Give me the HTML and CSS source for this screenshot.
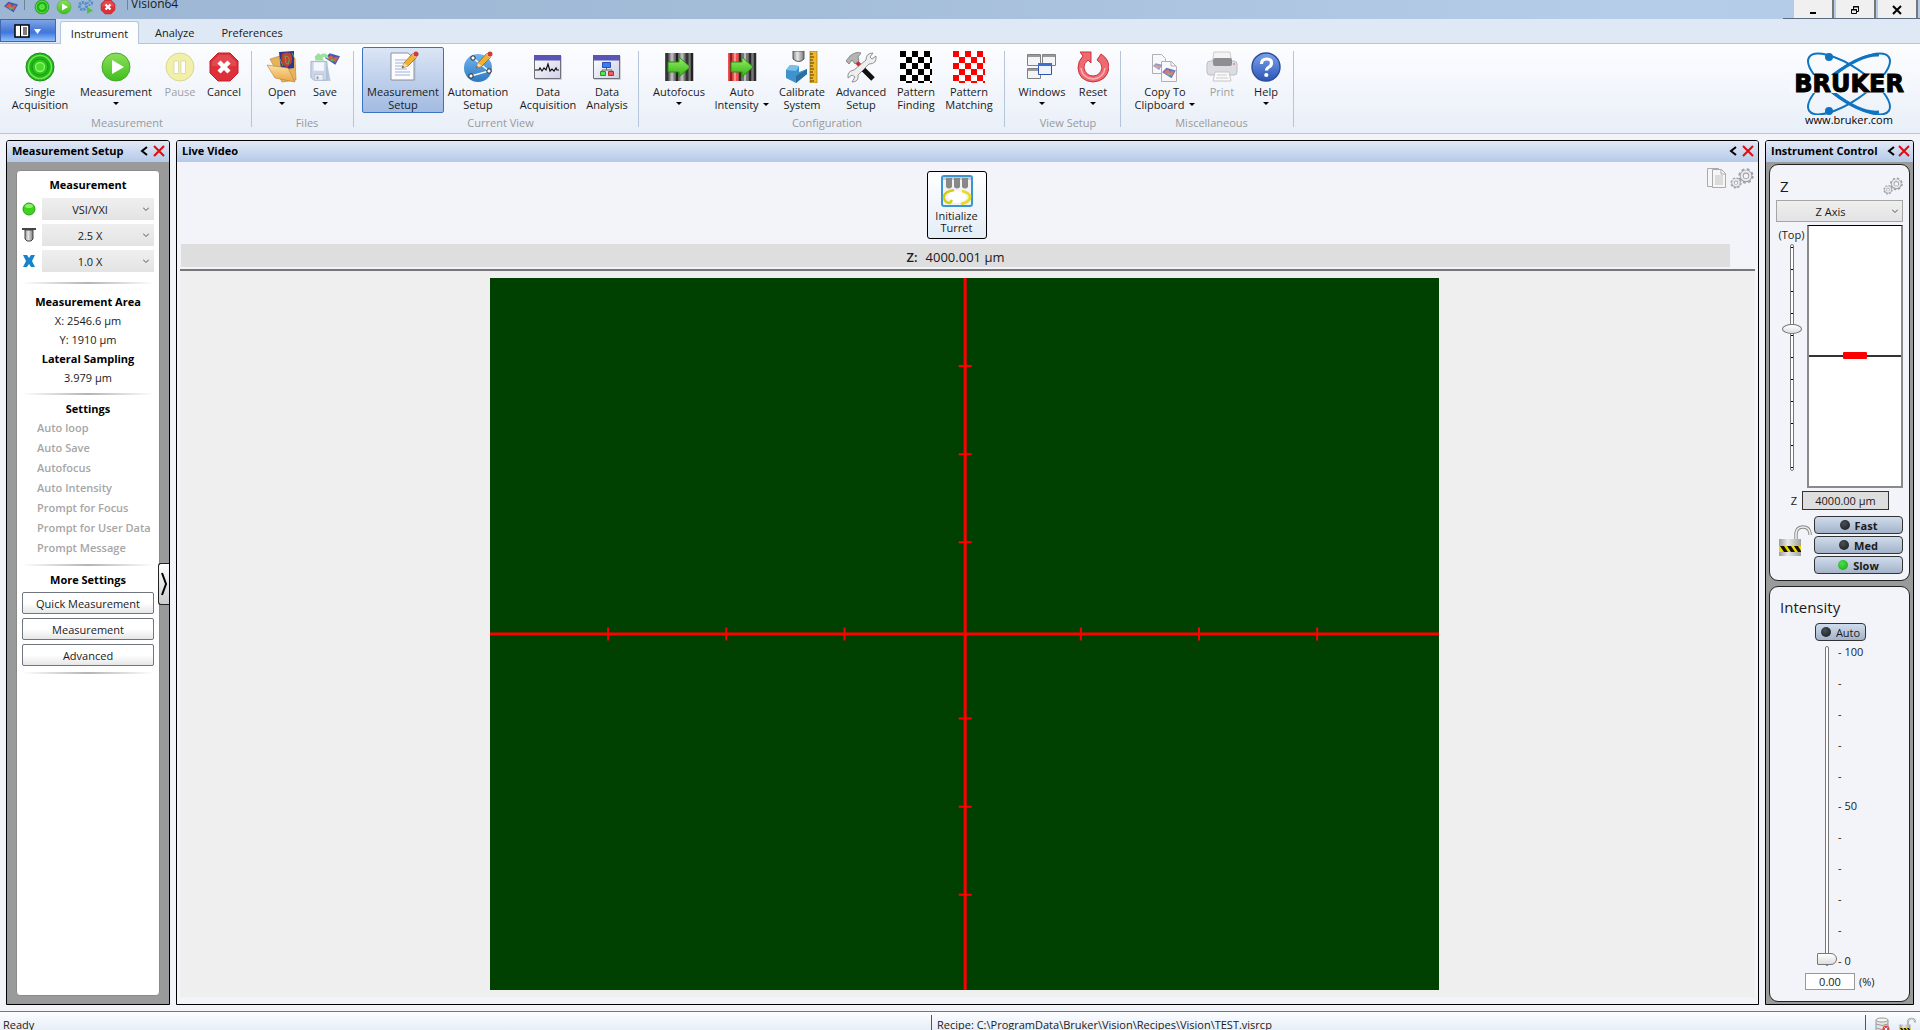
FILE: index.html
```html
<!DOCTYPE html>
<html lang="en">
<head>
<meta charset="utf-8">
<title>Vision64</title>
<link rel="stylesheet" href="styles.css">
</head>
<body>
<svg class="defs" aria-hidden="true">
  <defs>
    <linearGradient id="gGreen" x1="0" y1="0" x2="0" y2="1"><stop offset="0" stop-color="#8be05a"/><stop offset="1" stop-color="#3fbf1c"/></linearGradient>
    <linearGradient id="gArrow" x1="0" y1="0" x2="0" y2="1"><stop offset="0" stop-color="#9af06a"/><stop offset="1" stop-color="#2eb010"/></linearGradient>
    <linearGradient id="gBlue" x1="0" y1="0" x2="0" y2="1"><stop offset="0" stop-color="#6fb6f0"/><stop offset="1" stop-color="#2f78c0"/></linearGradient>
    <linearGradient id="gHelp" x1="0" y1="0" x2="0" y2="1"><stop offset="0" stop-color="#7da2ea"/><stop offset="1" stop-color="#2b55b8"/></linearGradient>
    <linearGradient id="gSteel" x1="0" y1="0" x2="1" y2="0"><stop offset="0" stop-color="#8a8a8a"/><stop offset=".4" stop-color="#e8e8e8"/><stop offset="1" stop-color="#777"/></linearGradient>
    <linearGradient id="gLock" x1="0" y1="0" x2="1" y2="0"><stop offset="0" stop-color="#9c9c9c"/><stop offset=".4" stop-color="#e8e8e8"/><stop offset="1" stop-color="#a0a0a0"/></linearGradient>
    <linearGradient id="gFolder" x1="0" y1="0" x2="0" y2="1"><stop offset="0" stop-color="#fde0a0"/><stop offset="1" stop-color="#e9a545"/></linearGradient>
    <linearGradient id="gPane" x1="0" y1="0" x2="1" y2="1"><stop offset="0" stop-color="#fff"/><stop offset="1" stop-color="#cfd0e8"/></linearGradient>
    <symbol id="single" viewBox="0 0 32 32"><circle cx="16" cy="16" r="14" fill="#22b41c" stroke="#1c8f1a"/><circle cx="16" cy="16" r="11.500" fill="none" stroke="#6ee84a" stroke-width="1.600"/><circle cx="16" cy="16" r="8" fill="#2cc71c" stroke="#189c14"/><circle cx="16" cy="16" r="4.500" fill="#4bdc30" stroke="#8cf566" stroke-width="1.400"/></symbol>
    <symbol id="play" viewBox="0 0 32 32"><circle cx="16" cy="16" r="14" fill="url(#gGreen)" stroke="#4aa52c"/><path d="M12 9 24 16 12 23Z" fill="#fff"/></symbol>
    <symbol id="pause" viewBox="0 0 32 32"><circle cx="16" cy="16" r="14" fill="#f1efa8" stroke="#d9d794"/><path d="M10 10h4.500v12.500H10zM17 10h4.500v12.500H17z" fill="#fff" stroke="#d2d0a0" stroke-width=".7"/></symbol>
    <symbol id="cancel" viewBox="0 0 32 32"><path d="M10 2h12l8 8v12l-8 8H10l-8-8V10Z" fill="#dd3038" stroke="#c02028"/><path d="M4 11 11 4h10l7 7v4H4Z" fill="#fff" opacity=".13"/><path d="m11 11 10 10M21 11 11 21" stroke="#fff" stroke-width="4.400"/></symbol>
    <symbol id="surface" viewBox="0 0 16 14"><path d="m0 6 5-5 11 3-5 9Z" fill="#4358b8"/><path d="m2 6 4-3 3 2-2 4ZM10 5l4 0-3 6-2-2Z" fill="#e05a3c"/><path d="m5 8 4-2 1 3-2 1Z" fill="#58b060"/></symbol>
    <symbol id="open" viewBox="0 0 32 32"><path d="M4 8 14 5l2 3 13-1 1 22-14 2Z" fill="#e7b25c" stroke="#b5802e" stroke-width=".6"/><path d="M13 1 28 0v17l-13 2Z" fill="#2a3590"/><path d="M16 3q9-4 10 3t-5 10q-7-2-5-13Z" fill="#c4402c"/><path d="M19 5q5 0 4 5t-3 2ZM26 2l2 4M14 8l3 7" stroke="#52b060" fill="none"/><path d="m1 14 21 3 7 14-20-4Z" fill="url(#gFolder)" stroke="#b5802e" stroke-width=".6"/></symbol>
    <symbol id="save" viewBox="0 0 34 32"><use href="#surface" x="17" y="0" width="16" height="15"/><path d="M6 5 10 1l2 2q8-4 9 5-4-4-7-2l2 3-9 0Z" fill="#9be09a"/><path d="m3 10 16 1 4 20-18-1Z" fill="#b9c7de"/><path d="M2 10h17v20H5l-3-3Z" fill="#c9d6ea" stroke="#a5b6d0"/><path d="M5 11h11v9H5z" fill="#f4f7fb"/><path d="M6 24h9v6H6z" fill="#eceff4" stroke="#a9b3c4" stroke-width=".6"/><path d="M8 26h2v3H8z" fill="#8e9bb2"/></symbol>
    <symbol id="pencil" viewBox="0 0 18 18"><path d="m1 17 2-5L12 2l4 4-9 9Z" fill="#f0b030" stroke="#9a6a18" stroke-width=".8"/><path d="m1 17 2-5 4 3Z" fill="#f4dcb0"/><path d="m1 17 1-2 1 1Z" fill="#222"/><path d="m11 3 4 4 1-1-4-4Z" fill="#ddd"/><circle cx="15" cy="3" r="2.500" fill="#d23a3a"/></symbol>
    <symbol id="msetup" viewBox="0 0 32 32"><path d="M6 3h23v27H6z" fill="#b9c0cc" opacity=".6"/><path d="M4 2h17l6 6v21H4z" fill="#fcfcff" stroke="#8c93a3"/><path d="M8 9h11M8 12h10M8 15h9M8 18h12M8 21h15M8 24h15" stroke="#9fb0d8"/><use href="#pencil" x="14" y="0" width="18" height="18"/></symbol>
    <symbol id="asetup" viewBox="0 0 32 32"><circle cx="16" cy="17" r="14" fill="url(#gBlue)"/><path d="M11 7 27 20 9 25" fill="none" stroke="#fff" stroke-width="1.300"/><g fill="#fff" stroke="#222"><circle cx="11" cy="7" r="2.200"/><circle cx="27" cy="20" r="2.200"/><circle cx="9" cy="25" r="2.200"/></g><use href="#pencil" x="13" y="0" width="18" height="18"/></symbol>
    <symbol id="dacq" viewBox="0 0 32 32"><path d="M3 5h27v24H3z" fill="#aaa" opacity=".5"/><path d="M2.500 4.500h26v23h-26z" fill="url(#gPane)" stroke="#70707c"/><path d="M2 4h27v5.500H2z" fill="#5a54b4"/><path d="M3 19h4l1-2 2 3 2-3 2 2 2-6 2 7 2-2 2 2 2-3 1 2h2" fill="none" stroke="#111" stroke-width="1.200"/></symbol>
    <symbol id="dana" viewBox="0 0 32 32"><path d="M3 5h27v24H3z" fill="#aaa" opacity=".5"/><path d="M2.500 4.500h26v23h-26z" fill="url(#gPane)" stroke="#70707c"/><path d="M2 4h27v5.500H2z" fill="#5a54b4"/><path d="M15.500 15v4M11 21v-2h10v2" fill="none" stroke="#666"/><path d="M11.500 11.500h8v5h-8z" fill="#3f7bf0" stroke="#2450b8"/><path d="M9.500 20.500h5v4h-5z" fill="#55e055" stroke="#2c962c"/><path d="M17.500 20.500h5v4h-5z" fill="#f05a5a" stroke="#b43030"/></symbol>
    <symbol id="arrow" viewBox="0 0 24 22"><path d="M1 6h11V1l11 10-11 10v-5H1Z" fill="url(#gArrow)" stroke="#2c8a14"/></symbol>
    <symbol id="afocus" viewBox="0 0 32 32"><path d="M2 2h28v28H2z" fill="#777"/><path d="M4 2v28M24 2v28" stroke="#333" stroke-width="3"/><path d="M9 2v28M19 2v28" stroke="#b8b8b8" stroke-width="3"/><path d="M14 2v28M29 2v28" stroke="#222" stroke-width="2.500"/><use href="#arrow" x="4" y="5" width="24" height="22"/></symbol>
    <symbol id="aint" viewBox="0 0 32 32"><path d="M2 2h14v28H2z" fill="#f05050"/><path d="M16 2h14v28H16z" fill="#777"/><path d="M5 2v28" stroke="#8a2020" stroke-width="2.500"/><path d="M9 2v28" stroke="#ff9090" stroke-width="2"/><path d="M14 2v28M24 2v28M29 2v28" stroke="#2a2a2a" stroke-width="2.500"/><path d="M19 2v28" stroke="#bbb" stroke-width="2"/><use href="#arrow" x="4" y="5" width="24" height="22"/></symbol>
    <symbol id="calib" viewBox="0 0 32 32"><path d="M7 0h11v8q-5 5-11 0Z" fill="url(#gSteel)" stroke="#555"/><path d="m0 19 4-5 9 1v6l8-3v5l-11 9-10-5Z" fill="#3f93cc"/><path d="m0 19 4-5 9 1-3 5Z" fill="#7cc0ea"/><path d="m10 25 11-7v5l-11 9Z" fill="#2a6ea4"/><path d="M24 0h7v32h-7z" fill="#f0b828" stroke="#a07818" stroke-width=".7"/><path d="M24 3h3M24 6h4M24 9h3M24 12h4M24 15h3M24 18h4M24 21h3M24 24h4M24 27h3M24 30h4" stroke="#4a3a08"/></symbol>
    <symbol id="tools" viewBox="0 0 32 32"><path d="m10 9 7 8" stroke="#e02020" stroke-width="4"/><path d="m18 18 10 10" stroke="#111" stroke-width="5"/><path d="m1 10 4-5q6-5 11-3l-3 4 1 4-4 3-3-4-3 4Z" fill="#b4b4b4" stroke="#777" stroke-width=".8"/><path d="M21 9q0-7 7-7l-3 4 2 2 4-3q1 8-7 8L13 24q1 7-6 7l3-5-3-2-4 3q-1-7 6-8Z" fill="#eee" stroke="#888" stroke-width=".9"/></symbol>
    <pattern id="pBlack" width="12" height="12" patternUnits="userSpaceOnUse"><path fill="#fff" d="M0 0h12v12H0z"/><path d="M0 0h6v6H0zM6 6h6v6H6z"/></pattern>
    <pattern id="pRed" width="12" height="12" patternUnits="userSpaceOnUse"><path fill="#fff" d="M0 0h12v12H0z"/><path fill="#f00" d="M0 0h6v6H0zM6 6h6v6H6z"/></pattern>
    <symbol id="pfind" viewBox="0 0 32 32"><path fill="url(#pBlack)" d="M0 0h32v32H0z"/></symbol>
    <symbol id="pmatch" viewBox="0 0 32 32"><path fill="url(#pRed)" d="M0 0h32v32H0z"/></symbol>
    <symbol id="windows" viewBox="0 0 32 32"><g fill="#f4f4f6" stroke="#808080"><path d="M1.500 3.500h13v11h-13zM16.500 3.500h13v11h-13zM1.500 17.500h13v10h-13z"/></g><path d="M2 5h12M17 5h12M2 19h12" stroke="#999" stroke-width="2"/><path d="M12.500 12.500h13v11h-13z" fill="#eef3ff" stroke="#2f55a8"/><path d="M12 13.500h14" stroke="#3d6ed0" stroke-width="3"/></symbol>
    <symbol id="reset" viewBox="0 0 32 32"><path d="M3 1h11v11l-3-3q-5 4-4 8 2 8 9 8t9-8q0-5-5-8l4-6q8 5 8 14-2 13-16 14Q2 30 1 17 1 10 6 5Z" fill="#ee6a70" stroke="#c8323a"/><path d="M4 17q1 10 12 11 11-1 12-11" fill="none" stroke="#fbb0b2" stroke-width="1.500"/></symbol>
    <symbol id="copy" viewBox="0 0 32 32"><g fill="#f8f8fa" stroke="#b0b0b4"><path d="M3.500 3.500h9l4 4v15h-13z"/><path d="M12.500 10.500h10l5 5v15h-15z"/></g><path d="M22 10v5h5" fill="none" stroke="#b0b0b4"/><use href="#surface" x="4" y="11" width="9" height="9" opacity=".6"/><use href="#surface" x="13" y="16" width="14" height="12" opacity=".8"/></symbol>
    <symbol id="print" viewBox="0 0 32 32"><path d="M8 1h16l2 12H6Z" fill="#f4f4f4" stroke="#ccc"/><rect x="1" y="10" width="30" height="14" rx="3" fill="#dcdce2" stroke="#bdbdc6"/><rect x="7" y="7" width="19" height="8" rx="2" fill="#8d8d92"/><path d="M9 21h14l2 9H7Z" fill="#fafafa" stroke="#c6c6cc"/><path d="M11 24h10M10 27h12" stroke="#ccc"/><circle cx="28" cy="13" r="1" fill="#f08080"/></symbol>
    <symbol id="help" viewBox="0 0 32 32"><circle cx="16" cy="16" r="14" fill="url(#gHelp)" stroke="#2a4c9c" stroke-width="1.400"/><path d="M11.500 13q0-5 5-5t5 4q0 2.500-2.500 4t-2.500 3.500" fill="none" stroke="#fff" stroke-width="3.200"/><circle cx="16.300" cy="24" r="2.100" fill="#fff"/></symbol>
    <symbol id="gears" viewBox="0 0 24 21"><g fill="none" stroke="#a2a2a8"><circle cx="16" cy="8" r="6.200" stroke-width="3" stroke-dasharray="2.600 2.270"/><circle cx="16" cy="8" r="4.300" stroke-width="4"/><circle cx="6" cy="15" r="4.300" stroke-width="2.600" stroke-dasharray="1.900 1.480"/><circle cx="6" cy="15" r="3" stroke-width="3.200"/></g><g fill="none" stroke="#e9e9ee"><circle cx="16" cy="7.700" r="4.300" stroke-width="2.200"/><circle cx="6" cy="14.700" r="3" stroke-width="1.700"/></g></symbol>
    <symbol id="pages" viewBox="0 0 20 22"><g fill="#f6f6f6" stroke="#aaa"><path d="M.5 1.500h11v18H.5z"/><path d="M5.500 2.500h9l4 4v14h-13z"/></g><path d="M8 9h8M8 11h8M8 13h8M8 15h8M8 17h8" stroke="#c0c0c0"/><path d="M14 3v4h4" fill="none" stroke="#aaa"/></symbol>
    <symbol id="turret" viewBox="0 0 32 32"><rect x="1" y="1" width="30" height="30" rx="2" fill="#f2f2f2" stroke="#3a96d2" stroke-width="2"/><path d="M2 2h28v3H2z" fill="#ccc"/><path d="M5 3h6v9q-3 3-6 0ZM13 3h6v9q-3 3-6 0ZM21 3h6v9q-3 3-6 0Z" fill="#888"/><ellipse cx="16" cy="22" rx="9" ry="6" fill="#fff"/><path d="M13 15Q2 17 3 23q1 5 6 5l2-3" fill="none" stroke="#d8cc10" stroke-width="2.400"/><path d="M21 16q8 2 8 6 0 5-9 7" fill="none" stroke="#e6dc20" stroke-width="2.800"/></symbol>
    <symbol id="lock" viewBox="0 0 34 34"><path d="M18 16V9q1-6 7-6t7 6v2" fill="none" stroke="#888" stroke-width="3.400"/><path d="M18 16V9q1-6 7-6t7 6v2" fill="none" stroke="#eee" stroke-width="1.600"/><rect x="1" y="15" width="22" height="17" fill="url(#gLock)"/><path d="M1 22h22v6H1z" fill="#f2d800"/><path d="m2 22 4 6h4l-4-6ZM9 22l4 6h4l-4-6ZM16 22l4 6h3v-1l-3-5Z" fill="#111"/></symbol>
    <symbol id="lens" viewBox="0 0 14 14"><path d="M0 0h14v2H0z" fill="#444"/><path d="M3 2h8v9l-2 2H5l-2-2Z" fill="url(#gSteel)" stroke="#444"/></symbol>
    <symbol id="cross" viewBox="0 0 12 12"><path d="m1 1 10 10M11 1 1 11" stroke="#e00b0b" stroke-width="2"/></symbol>
    <symbol id="less" viewBox="0 0 8 10"><path d="M7 1 2 5l5 4" fill="none" stroke="#000" stroke-width="2"/></symbol>
    <symbol id="chev" viewBox="0 0 6 4"><path d="m0 .5 3 3 3-3" fill="none" stroke="#555"/></symbol>
  </defs>
</svg>

<header class="titlebar">
  <div class="quick">
    <svg width="14" height="14"><use href="#surface"/></svg>
    <i class="bar"></i>
    <button aria-label="Single acquisition"><svg width="16" height="16"><use href="#single"/></svg></button>
    <button aria-label="Measurement"><svg width="16" height="16"><use href="#play"/></svg></button>
    <button aria-label="Automation"><svg width="16" height="16" viewBox="0 0 16 16"><g fill="none" stroke="#4d8fc4"><circle cx="5" cy="7" r="3.500" stroke-width="3" stroke-dasharray="2 1"/><circle cx="12" cy="4" r="2" stroke-width="2" stroke-dasharray="1.500 1"/></g><path d="m9 8 6 3.500L9 15Z" fill="#4fc040"/></svg></button>
    <button aria-label="Cancel"><svg width="16" height="16"><use href="#cancel"/></svg></button>
    <i class="bar"></i>
  </div>
  <span class="app-name">Vision64</span>
  <div class="winbtns">
    <button aria-label="Minimize"><svg width="12" height="12" viewBox="0 0 12 12"><path d="M3 9h6" stroke="#000" stroke-width="2"/></svg></button>
    <button aria-label="Restore"><svg width="12" height="12" viewBox="0 0 12 12"><path d="M4.500 5V2.500h5v5H7M4 3h6M2.500 5.500h5v4h-5zM2 6h6" fill="none" stroke="#000"/></svg></button>
    <button aria-label="Close"><svg width="12" height="12" viewBox="0 0 12 12"><path d="m2 2 8 8M10 2l-8 8" stroke="#000" stroke-width="2"/></svg></button>
  </div>
</header>

<nav class="tabs">
  <button class="appmenu" aria-label="Application menu"><svg width="28" height="14" viewBox="0 0 28 14"><path d="M1 1h14v12H1z" fill="#fff" stroke="#000" stroke-width="1.500"/><path d="M6.500 1v12M9 4h4M9 6h4M9 8h4M9 10h4" stroke="#000"/><path d="M20 5h7l-3.500 5Z" fill="#fff"/></svg></button>
  <a class="tab active" href="#instrument">Instrument</a>
  <a class="tab analyze" href="#analyze">Analyze</a>
  <a class="tab prefs" href="#preferences">Preferences</a>
</nav>

<section class="ribbon" id="instrument">
  <div class="group g-measure">
    <div class="tools">
      <button><svg><use href="#single"/></svg><span>Single<br>Acquisition</span></button>
      <button><svg><use href="#play"/></svg><span>Measurement</span><i class="drop"></i></button>
      <button disabled><svg><use href="#pause"/></svg><span>Pause</span></button>
      <button><svg><use href="#cancel"/></svg><span>Cancel</span></button>
    </div>
    <h2>Measurement</h2>
  </div>
  <div class="group g-files">
    <div class="tools">
      <button><svg><use href="#open"/></svg><span>Open</span><i class="drop"></i></button>
      <button><svg><use href="#save"/></svg><span>Save</span><i class="drop"></i></button>
    </div>
    <h2>Files</h2>
  </div>
  <div class="group g-view">
    <div class="tools">
      <button class="selected"><svg><use href="#msetup"/></svg><span>Measurement<br>Setup</span></button>
      <button><svg><use href="#asetup"/></svg><span>Automation<br>Setup</span></button>
      <button><svg><use href="#dacq"/></svg><span>Data<br>Acquisition</span></button>
      <button><svg><use href="#dana"/></svg><span>Data<br>Analysis</span></button>
    </div>
    <h2>Current View</h2>
  </div>
  <div class="group g-config">
    <div class="tools">
      <button><svg><use href="#afocus"/></svg><span>Autofocus</span><i class="drop"></i></button>
      <button><svg><use href="#aint"/></svg><span>Auto<br>Intensity <i class="drop inline"></i></span></button>
      <button><svg><use href="#calib"/></svg><span>Calibrate<br>System</span></button>
      <button><svg><use href="#tools"/></svg><span>Advanced<br>Setup</span></button>
      <button><svg><use href="#pfind"/></svg><span>Pattern<br>Finding</span></button>
      <button><svg><use href="#pmatch"/></svg><span>Pattern<br>Matching</span></button>
    </div>
    <h2>Configuration</h2>
  </div>
  <div class="group g-setup">
    <div class="tools">
      <button><svg><use href="#windows"/></svg><span>Windows</span><i class="drop"></i></button>
      <button><svg><use href="#reset"/></svg><span>Reset</span><i class="drop"></i></button>
    </div>
    <h2>View Setup</h2>
  </div>
  <div class="group g-misc">
    <div class="tools">
      <button><svg><use href="#copy"/></svg><span>Copy To<br>Clipboard <i class="drop inline"></i></span></button>
      <button disabled><svg><use href="#print"/></svg><span>Print</span></button>
      <button><svg><use href="#help"/></svg><span>Help</span><i class="drop"></i></button>
    </div>
    <h2>Miscellaneous</h2>
  </div>
  <a class="brand" href="#bruker">
    <svg width="120" height="64" viewBox="0 0 120 64">
      <g fill="none" stroke="#0f74c0">
        <ellipse cx="60" cy="33" rx="48" ry="17" transform="rotate(34 60 33)" stroke-width="2"/>
        <ellipse cx="60" cy="33" rx="48" ry="17" transform="rotate(-34 60 33)" stroke-width="2"/>
        <path d="M45 24Q72 3 90 4" stroke-width="3"/><path d="M45 42Q72 63 90 61" stroke-width="3"/>
      </g>
      <path d="M0 24h120v18H0z" fill="#f5f8fc"/>
      <circle cx="40" cy="6" r="4" fill="#0f74c0"/><circle cx="40" cy="60" r="4" fill="#0f74c0"/>
      <text x="60" y="41" class="logo-text" text-anchor="middle">BRUKER</text>
    </svg>
    <span>www.bruker.com</span>
  </a>
</section>

<main class="workspace">
  <aside class="panel setup">
    <header><h1>Measurement Setup</h1><button aria-label="Collapse"><svg width="8" height="10"><use href="#less"/></svg></button><button aria-label="Close"><svg width="12" height="12"><use href="#cross"/></svg></button></header>
    <div class="graybody">
      <div class="card">
        <h3>Measurement</h3>
        <div class="combos">
          <label for="mode"><svg width="14" height="14" viewBox="0 0 14 14"><circle cx="7" cy="7" r="6" fill="#3bd31c" stroke="#2a9e18"/><ellipse cx="7" cy="4" rx="4" ry="2" fill="#8cf06c"/></svg></label>
          <div class="combo"><select id="mode"><option>VSI/VXI</option></select><svg width="6" height="4"><use href="#chev"/></svg></div>
          <label for="objective"><svg width="14" height="14"><use href="#lens"/></svg></label>
          <div class="combo"><select id="objective"><option>2.5 X</option></select><svg width="6" height="4"><use href="#chev"/></svg></div>
          <label for="fov"><svg width="14" height="14" viewBox="0 0 14 14"><path d="M1 1h4l2 3 2-3h4L10 7l3 6H9l-2-3-2 3H1l3-6Z" fill="#1684cc"/></svg></label>
          <div class="combo"><select id="fov"><option>1.0 X</option></select><svg width="6" height="4"><use href="#chev"/></svg></div>
        </div>
        <hr class="wide">
        <h3>Measurement Area</h3>
        <p>X: 2546.6 µm</p>
        <p>Y: 1910 µm</p>
        <h3>Lateral Sampling</h3>
        <p>3.979 µm</p>
        <hr>
        <h3>Settings</h3>
        <ul>
          <li>Auto loop</li><li>Auto Save</li><li>Autofocus</li><li>Auto Intensity</li><li>Prompt for Focus</li><li>Prompt for User Data</li><li>Prompt Message</li>
        </ul>
        <hr>
        <h3>More Settings</h3>
        <div class="more">
          <button>Quick Measurement</button>
          <button>Measurement</button>
          <button>Advanced</button>
        </div>
        <hr>
      </div>
      <button class="expander" aria-label="Expand"><svg width="8" height="26" viewBox="0 0 8 26"><path d="m2 2 4 11-4 11" fill="none" stroke="#000" stroke-width="2"/></svg></button>
    </div>
  </aside>

  <section class="panel live">
    <header><h1>Live Video</h1><button aria-label="Collapse"><svg width="8" height="10"><use href="#less"/></svg></button><button aria-label="Close"><svg width="12" height="12"><use href="#cross"/></svg></button></header>
    <div class="livebar">
      <button class="turret"><svg width="32" height="32"><use href="#turret"/></svg><span>Initialize<br>Turret</span></button>
      <div class="corner"><button aria-label="Copy"><svg width="20" height="22"><use href="#pages"/></svg></button><button aria-label="Options"><svg width="24" height="21"><use href="#gears"/></svg></button></div>
    </div>
    <div class="zbar"><b>Z:</b><span>4000.001 µm</span></div>
    <div class="video">
      <svg viewBox="0 0 948 711" role="img" aria-label="Live video with crosshair">
        <path d="M0 0h948v711H0z" fill="#004000"/>
        <g stroke="#f00" fill="none">
          <path d="M474.500 0v711M0 355.500h948" stroke-width="3"/>
          <path d="M468 88h13M468 176h13M468 264h13M468 440h13M468 528h13M468 616h13M118 349v13M236 349v13M354 349v13M590 349v13M708 349v13M826 349v13" stroke-width="2"/>
        </g>
      </svg>
    </div>
  </section>

  <aside class="panel control">
    <header><h1>Instrument Control</h1><button aria-label="Collapse"><svg width="8" height="10"><use href="#less"/></svg></button><button aria-label="Close"><svg width="12" height="12"><use href="#cross"/></svg></button></header>
    <div class="graybody">
      <div class="box zbox">
        <div class="boxhead"><h3>Z</h3><button aria-label="Z options"><svg width="20" height="18"><use href="#gears"/></svg></button></div>
        <div class="combo axis"><select aria-label="Axis"><option>Z Axis</option></select><svg width="6" height="4"><use href="#chev"/></svg></div>
        <div class="zrow">
          <div class="zscale"><label for="zpos">(Top)</label><input id="zpos" class="vrange oval" type="range" min="0" max="1000" value="632"></div>
          <div class="stage"><svg width="24" height="8"><rect y="0" width="24" height="7" rx="1" fill="#f00"/></svg></div>
        </div>
        <div class="zvalue"><label for="zval">Z</label><input id="zval" type="text" value="4000.00 µm"></div>
        <div class="speeds">
          <svg width="34" height="34"><use href="#lock"/></svg>
          <div><button><i></i>Fast</button><button><i></i>Med</button><button><i class="on"></i>Slow</button></div>
        </div>
      </div>
      <div class="box ibox">
        <h3>Intensity</h3>
        <button class="auto"><i></i>Auto</button>
        <div class="irow">
          <input class="vrange tag" aria-label="Intensity" type="range" min="0" max="100" value="0">
          <ol><li>- 100</li><li>-</li><li>-</li><li>-</li><li>-</li><li>- 50</li><li>-</li><li>-</li><li>-</li><li>-</li><li>- 0</li></ol>
        </div>
        <div class="ivalue"><input id="ival" type="text" value="0.00"><label for="ival">(%)</label></div>
      </div>
    </div>
  </aside>
</main>

<footer class="status">
  <span class="ready">Ready</span>
  <span class="recipe">Recipe: C:\ProgramData\Bruker\Vision\Recipes\Vision\TEST.visrcp</span>
  <div class="sicons">
    <svg width="15" height="18" viewBox="0 0 15 18"><path d="M1 3v12q6 3 12 0V3" fill="#e4e4e4" stroke="#999"/><ellipse cx="7" cy="3" rx="6" ry="2" fill="#f4f4f4" stroke="#999"/><path d="M1 7q6 3 12 0M1 11q6 3 12 0" fill="none" stroke="#999"/><circle cx="11" cy="12" r="3.500" fill="#e04848"/><path d="m9.500 10.500 3 3m0-3-3 3" stroke="#fff"/></svg>
    <svg width="17" height="17"><use href="#lock"/></svg>
  </div>
</footer>
</body>
</html>
```

FILE: styles.css
```css
* { box-sizing: border-box; }
html, body { height: 100%; }
body {
  margin: 0;
  display: flex;
  flex-direction: column;
  overflow: hidden;
  background: #f3f4fa;
  color: #1a1a1a;
  font: 11px/13px "Open Sans", "Noto Sans", sans-serif;
}
h1, h2, h3, p, ul, ol { margin: 0; padding: 0; }
ul, ol { list-style: none; }
button, input, select { font: inherit; color: inherit; margin: 0; }
button { padding: 0; border: 0; background: none; cursor: pointer; }
button svg { display: block; }
a { color: inherit; text-decoration: none; }
.defs { position: absolute; width: 0; height: 0; }

/* title bar */
.titlebar {
  flex: none;
  display: flex;
  align-items: flex-start;
  height: 19px;
  overflow: hidden;
  background: linear-gradient(90deg, #9cb6d4, #a3bcd8 40%, #b6cde9 85%, #b4cbe8);
}
.quick { display: flex; align-items: center; gap: 6px; height: 14px; padding-left: 4px; }
.quick .bar { width: 1px; height: 10px; align-self: flex-start; background: #6f8299; margin-right: 3px; }
.quick button:last-of-type { margin-right: 5px; }
.app-name { font-size: 12px; line-height: 8px; }
.winbtns { margin-left: auto; display: flex; gap: 2px; padding: 0 2px 0 11px; border-bottom: 1px solid #5c6c80; }
.winbtns button { width: 40px; height: 18px; display: flex; justify-content: center; align-items: flex-end; padding-bottom: 2px; background: #f0f0f0; border-right: 2px solid #777; }

/* tabs */
.tabs { flex: none; display: flex; align-items: flex-end; height: 25px; background: #dfe9f5; border-bottom: 1px solid #b5c6da; }
.appmenu {
  width: 56px;
  height: 23px;
  margin-right: 4px;
  align-self: flex-start;
  display: flex;
  align-items: center;
  justify-content: center;
  border: 1px solid #3f68b0;
  background: linear-gradient(#7ea4e4, #4a7ad8 50%, #3f78e0 60%, #8fc0f8);
}
.tab { height: 22px; padding: 0 11px; line-height: 24px; }
.tab.active { height: 23px; width: 79px; margin-bottom: -1px; padding: 0; text-align: center; background: #fcfdff; border: 1px solid #b5c6da; border-bottom: 0; border-radius: 3px 3px 0 0; }
.tab.analyze { margin-left: 5px; }
.tab.prefs { margin-left: 5px; }

/* ribbon */
.ribbon { flex: none; display: flex; height: 90px; background: linear-gradient(#fcfdff, #e9eff8); border-bottom: 1px solid #b5c6da; }
.group { position: relative; padding-top: 3px; height: 100%; }
.group::after { content: ""; position: absolute; right: 0; top: 7px; height: 76px; width: 1px; background: #b5c6da; }
.group h2 { font-size: 11px; font-weight: 400; line-height: 18px; color: #999; text-align: center; }
.tools { display: grid; height: 66px; margin-bottom: 1px; }
.tools button { display: flex; flex-direction: column; align-items: center; white-space: nowrap; padding-top: 3px; line-height: 13px; border: 1px solid transparent; border-radius: 2px; }
.tools svg { flex: none; width: 32px; height: 32px; margin-bottom: 2px; }
.tools button:disabled { color: #a0a0a0; }
.tools .selected { border-color: #3a73c4; background: linear-gradient(#dbe5f5, #a2bbe2); }
.drop { width: 0; height: 0; margin-top: 4px; border: 3px solid transparent; border-top: 3px solid #000; border-bottom: 0; }
.drop.inline { display: inline-block; margin: 0 0 3px 2px; }
.g-measure { width: 252px; padding-left: 2px; }
.g-measure .tools { grid-template-columns: 76px 76px 52px 36px; }
.g-files { width: 102px; padding-left: 8px; }
.g-files .tools { grid-template-columns: 44px 42px; }
.g-view { width: 285px; padding-left: 8px; }
.g-view .tools { grid-template-columns: 82px 68px 72px 46px; }
.g-config { width: 366px; padding-left: 10px; }
.g-config .tools { grid-template-columns: 60px 66px 54px 64px 46px 60px; }
.g-setup { width: 116px; padding-left: 10px; }
.g-setup .tools { grid-template-columns: 54px 48px; }
.g-misc { width: 173px; padding-left: 8px; }
.g-misc .tools { grid-template-columns: 72px 42px 46px; }
.brand { margin-left: auto; padding: 7px 11px 0 0; text-align: center; }
.brand svg { display: block; }
.brand span { display: block; font-size: 11px; line-height: 10px; color: #000; }
.logo-text { font: 700 24px "DejaVu Sans", sans-serif; fill: #000; stroke: #000; stroke-width: 1px; }

/* docked panels */
.workspace { flex: 1; min-height: 0; display: grid; grid-template-columns: 164px 1fr 149px; gap: 6px; padding: 6px; }
.panel { display: flex; flex-direction: column; min-width: 0; min-height: 0; border: 1px solid #000; border-radius: 3px 3px 0 0; }
.panel > header { flex: none; display: flex; align-items: center; gap: 5px; height: 21px; padding: 0 4px 2px 5px; background: linear-gradient(#e2e8f6, #b4cae8); border-radius: 2px 2px 0 0; }
.panel h1 { flex: 1; font-size: 11px; line-height: 18px; white-space: nowrap; color: #000; }
.graybody { flex: 1; min-height: 0; position: relative; display: flex; flex-direction: column; background: #9a9a9a; }

/* measurement setup */
.setup .graybody { padding: 8px 9px; }
.card { flex: 1; padding: 4px 5px; background: #fff; border: 1px solid #8a8a8a; border-radius: 4px; text-align: center; }
.card h3, .card p { font-size: 11px; line-height: 19px; white-space: nowrap; }
.card h3 { color: #000; }
.card hr { height: 2px; margin: 6px 0 4px; border: 0; background: linear-gradient(90deg, #fff, #b4b4b4, #fff); }
.card hr.wide { margin: 10px 0 8px; }
.combos { display: grid; grid-template-columns: 14px 112px; column-gap: 6px; row-gap: 4px; align-items: center; margin-top: 4px; }
.combos label svg { display: block; }
.combo { position: relative; height: 22px; }
.combo select { width: 100%; height: 100%; padding: 0 16px 0 0; border: 0; border-radius: 0; appearance: none; background: linear-gradient(#efefef, #e3e3e3); text-align-last: center; }
.combo svg { position: absolute; right: 5px; top: 9px; pointer-events: none; }
.card ul { text-align: left; padding-left: 15px; color: #a6a6a6; font-weight: 600; }
.card li { line-height: 20px; white-space: nowrap; }
.more { display: grid; gap: 4px; margin: 3px 0 0; }
.more button { height: 22px; border: 1px solid #6f7680; border-radius: 2px; background: linear-gradient(#fff 50%, #e6e6e6); }
.expander { position: absolute; right: 0; top: 401px; width: 11px; height: 42px; display: flex; align-items: center; justify-content: center; border: 1px solid #222; border-right: 0; border-radius: 3px 0 0 3px; background: linear-gradient(#fff, #ccc); }

/* live video */
.livebar { position: relative; flex: none; display: flex; justify-content: center; height: 82px; padding: 9px 22px 5px 0; }
.turret { width: 60px; height: 68px; display: flex; flex-direction: column; align-items: center; line-height: 12px; border: 1px solid #000; border-radius: 3px; background: linear-gradient(#fff, #e3edf7); padding-top: 3px; }
.turret svg { margin-bottom: 3px; }
.corner { position: absolute; right: 4px; top: 5px; display: flex; gap: 3px; }
.zbar { flex: none; display: flex; justify-content: center; gap: 8px; height: 23px; margin: 0 28px 2px 4px; background: #dedede; font-size: 13px; line-height: 26px; }
.zbar b { font-weight: 600; }
.video { flex: 1; min-height: 0; margin: 0 3px 7px; padding: 7px 6px 7px 0; display: flex; justify-content: center; background: #efefef; border-top: 2px solid #777; }
.video svg { height: 100%; }

/* instrument control */
.control > header { padding: 0 3px 2px 5px; gap: 3px; }
.control .graybody { padding: 2px 3px; gap: 5px; }
.box { background: #f3f4fa; border: 1px solid #222; border-radius: 9px; padding: 0 6px; }
.zbox { flex: none; height: 417px; }
.ibox { flex: 1; min-height: 0; display: flex; flex-direction: column; padding-bottom: 11px; }
.box h3 { font-size: 15px; line-height: 20px; font-weight: 400; }
.boxhead { display: flex; justify-content: space-between; padding: 11px 0 4px 4px; }
.axis select { border: 1px solid #a5a5a5; padding-right: 18px; }
.zrow { display: grid; grid-template-columns: 31px 96px; margin-top: 3px; height: 263px; }
.zscale { display: flex; flex-direction: column; align-items: center; }
.zscale label { line-height: 18px; padding-top: 1px; }
.stage { display: flex; align-items: center; justify-content: center; background: linear-gradient(#333, #333) center / 100% 2px no-repeat #fff; border: 2px solid #8a8a8a; border-top: 1px solid #000; }
.vrange { writing-mode: vertical-lr; direction: rtl; appearance: none; background: none; width: 20px; }
.oval { height: 227px; }
.vrange::-webkit-slider-runnable-track { width: 4px; height: 100%; border: 1px solid #777; border-radius: 2px; background: #fff; }
.oval::-webkit-slider-runnable-track { background: repeating-linear-gradient(transparent 0 3px, #000 3px 4px, transparent 4px 22px) border-box, #fff; }
.vrange::-webkit-slider-thumb { appearance: none; width: 20px; height: 10px; margin-left: -9px; border: 1px solid #777; background: linear-gradient(#fff, #ddd); }
.oval::-webkit-slider-thumb { border-radius: 50%; }
.tag::-webkit-slider-thumb { height: 12px; border-radius: 1px 6px 6px 1px; }
.zvalue { display: flex; gap: 5px; justify-content: flex-end; align-items: center; margin: 3px 14px 6px 0; }
.zvalue input { width: 87px; height: 19px; padding: 0; text-align: center; background: #dedede; border: 1px solid #333; }
.speeds { display: flex; align-items: center; justify-content: space-between; padding-left: 2px; }
.speeds > svg { align-self: flex-start; margin-top: 8px; }
.speeds div { display: grid; gap: 2px; width: 89px; }
.speeds button, .auto { display: flex; align-items: center; justify-content: center; gap: 5px; height: 18px; border: 1px solid #333; border-radius: 4px; background: linear-gradient(#cfdced, #a4b3c8); }
.speeds button { font-weight: 700; }
.speeds i, .auto i { width: 10px; height: 10px; border-radius: 50%; background: radial-gradient(circle at 40% 35%, #4a4f56, #15181c); }
.speeds i.on { background: radial-gradient(circle at 40% 35%, #4be04b, #14a014); }
.ibox h3 { padding: 10px 0 6px 4px; }
.auto { flex: none; width: 51px; margin-left: 39px; }
.irow { flex: 1; min-height: 0; display: flex; padding: 5px 0 7px 41px; }
.tag { height: 100%; }
.irow ol { display: flex; flex-direction: column; justify-content: space-between; height: 100%; margin-left: 1px; }
.irow li { line-height: 11px; }
.ivalue { flex: none; display: flex; align-items: center; gap: 4px; padding-left: 29px; }
.ivalue input { width: 50px; height: 17px; padding: 0; text-align: center; border: 1px solid #999; background: #fff; }

/* status bar */
.status { flex: none; display: flex; height: 19px; overflow: hidden; border-top: 1px solid #777; background: linear-gradient(#fcfdff, #e6eef7); line-height: 26px; }
.status span { padding-left: 3px; white-space: nowrap; }
.ready { width: 931px; }
.status .recipe { flex: 1; padding-left: 5px; margin-top: 3px; line-height: 20px; border-left: 1px solid #555; }
.sicons { width: 55px; display: flex; gap: 9px; margin-top: 3px; padding: 2px 0 0 9px; border-left: 1px solid #555; }
```
